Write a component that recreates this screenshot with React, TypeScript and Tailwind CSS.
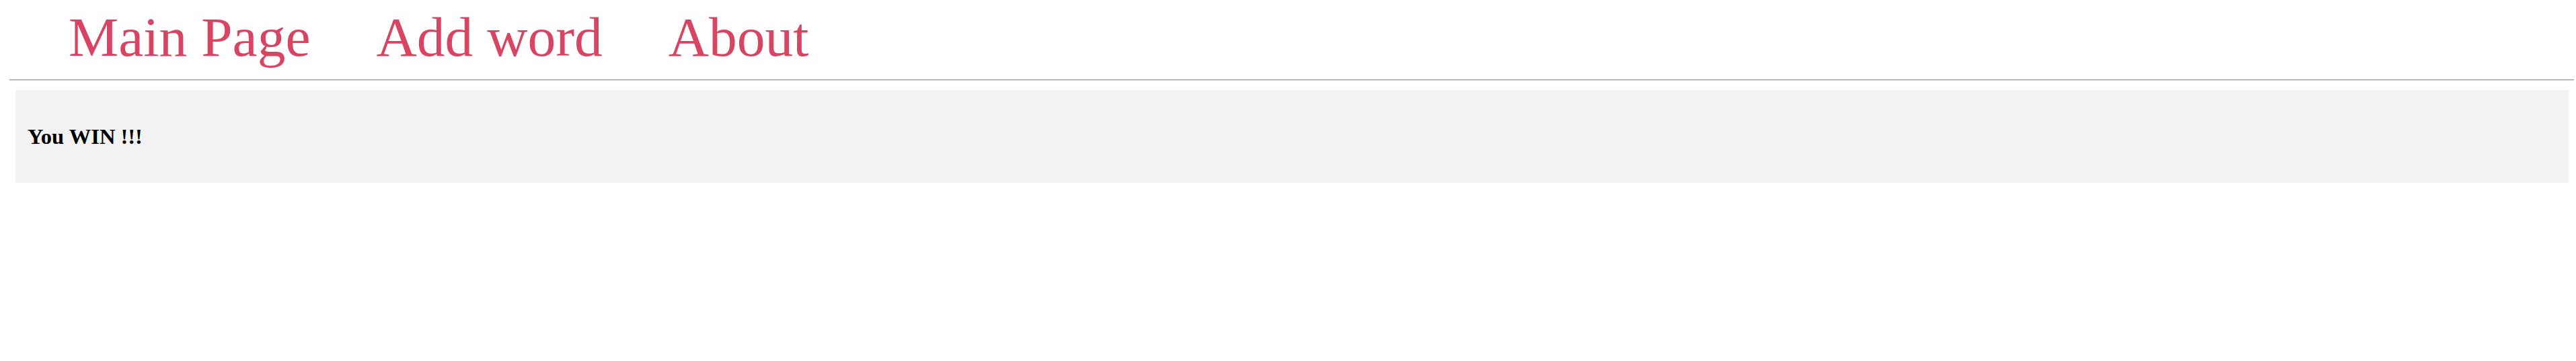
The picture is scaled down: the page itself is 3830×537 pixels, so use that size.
export default function App() {
  const links = ["Main Page", "Add word", "About"];

  return (
    <div className="min-h-[537px] bg-white font-['Liberation_Serif','Times_New_Roman',serif]">
      <nav className="flex h-[118px] gap-[98px] pl-[102px] pt-[9px]">
        {links.map((label) => (
          <a key={label} href="#" className="text-[83.5px] leading-[92px] text-[#d94462] no-underline">
            {label}
          </a>
        ))}
      </nav>
      <div className="ml-[14px] mr-[3px] h-[2px] border-t border-t-[#a0a0a0] border-b border-b-[#d6d6d6]" />
      <div className="ml-[23px] mr-[11px] mt-[14px] flex h-[138px] items-center bg-[#f2f2f2] px-[18px]">
        <h3 className="text-[32.5px] font-bold text-black">You WIN !!!</h3>
      </div>
    </div>
  );
}
